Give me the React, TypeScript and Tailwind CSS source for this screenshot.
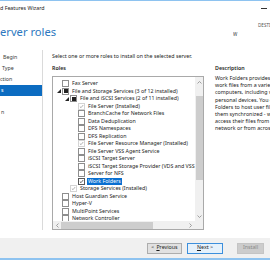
import React from "react";

type Row = {
  level: number;
  label: string;
  state: "off" | "partial" | "installed" | "on";
  expand?: boolean;
  selected?: boolean;
};

const ROWS: Row[] = [
  { level: 0, label: "Fax Server", state: "off" },
  { level: 0, label: "File and Storage Services (3 of 12 installed)", state: "partial", expand: true },
  { level: 1, label: "File and iSCSI Services (2 of 11 installed)", state: "partial", expand: true },
  { level: 2, label: "File Server (Installed)", state: "installed" },
  { level: 2, label: "BranchCache for Network Files", state: "off" },
  { level: 2, label: "Data Deduplication", state: "off" },
  { level: 2, label: "DFS Namespaces", state: "off" },
  { level: 2, label: "DFS Replication", state: "off" },
  { level: 2, label: "File Server Resource Manager (Installed)", state: "installed" },
  { level: 2, label: "File Server VSS Agent Service", state: "off" },
  { level: 2, label: "iSCSI Target Server", state: "off" },
  { level: 2, label: "iSCSI Target Storage Provider (VDS and VSS hardware providers)", state: "off" },
  { level: 2, label: "Server for NFS", state: "off" },
  { level: 2, label: "Work Folders", state: "on", selected: true },
  { level: 1, label: "Storage Services (Installed)", state: "installed" },
  { level: 0, label: "Host Guardian Service", state: "off" },
  { level: 0, label: "Hyper-V", state: "off" },
  { level: 0, label: "MultiPoint Services", state: "off" },
  { level: 0, label: "Network Controller", state: "off" },
];

const NAV = [
  { label: "Begin", pl: "pl-[3px]" },
  { label: "Type", pl: "pl-[2px]" },
  { label: "ction", pl: "pl-0" },
  { label: "s", pl: "pl-px", active: true },
  { label: "", pl: "pl-0" },
  { label: "n", pl: "pl-px" },
];

const DESCRIPTION = [
  "Work Folders provides a way to manage",
  "work files from a variety of",
  "computers, including work and",
  "personal devices. You can use Work",
  "Folders to host user files and keep",
  "them synchronized - whether users",
  "access their files from inside the",
  "network or from across the Internet.",
];

function Check({ color }: { color: string }) {
  return (
    <svg width="7" height="7" viewBox="0 0 7 7" className="block">
      <path d="M1.2 3.6 L2.8 5.2 L5.9 1.4" fill="none" stroke={color} strokeWidth="0.9" />
    </svg>
  );
}

function Box({ state }: { state: Row["state"] }) {
  if (state === "installed") {
    return (
      <div className="w-[7px] h-[7px] shrink-0 border border-[#d4d4d4] bg-white flex items-center justify-center">
        <Check color="#8a8a8a" />
      </div>
    );
  }
  if (state === "on") {
    return (
      <div className="w-[7px] h-[7px] shrink-0 border border-[#5a5a5a] bg-white flex items-center justify-center">
        <Check color="#111" />
      </div>
    );
  }
  return (
    <div className="w-[7px] h-[7px] shrink-0 border border-[#8e8e8e] bg-white flex items-center justify-center">
      {state === "partial" && <div className="w-[4px] h-[4px] bg-[#222]" />}
    </div>
  );
}

function TreeRow({ row }: { row: Row }) {
  const indent = ["pl-[3px]", "pl-[11px]", "pl-[19px]"][row.level];
  return (
    <div className={`flex items-center h-[7.5px] whitespace-nowrap ${indent}`}>
      <div className="w-[6px] h-[7px] shrink-0 flex items-center justify-center">
        {row.expand && (
          <svg width="4" height="4" viewBox="0 0 4 4" className="block">
            <polygon points="4,0 4,4 0,4" fill="#262626" />
          </svg>
        )}
      </div>
      <Box state={row.state} />
      <span
        className={`ml-[2px] px-px leading-[7px] ${
          row.selected ? "bg-[#0a6fd0] text-white" : "text-[#1b1b1b]"
        }`}
      >
        {row.label}
      </span>
    </div>
  );
}

function Chevron({ dir }: { dir: "up" | "down" | "left" | "right" }) {
  const d = {
    up: "M1.5 4.5 L3.5 2.5 L5.5 4.5",
    down: "M1.5 2.5 L3.5 4.5 L5.5 2.5",
    left: "M4.5 1.5 L2.5 3.5 L4.5 5.5",
    right: "M2.5 1.5 L4.5 3.5 L2.5 5.5",
  }[dir];
  return (
    <svg width="7" height="7" viewBox="0 0 7 7" className="block">
      <path d={d} fill="none" stroke="#8a8a8a" strokeWidth="0.8" />
    </svg>
  );
}

export default function App() {
  return (
    <div className="w-[270px] h-[260px] overflow-hidden bg-white flex flex-col font-['Noto_Sans',sans-serif] text-[5.3px] text-[#1b1b1b]">
      <div className="h-px shrink-0 bg-[#8ec3f0]" />

      {/* title bar */}
      <div className="h-[15px] shrink-0 flex items-center justify-between">
        <span className="text-[#222] whitespace-nowrap">d Features Wizard</span>
        <span className="mr-[3px] w-[6px] h-px bg-[#333]" />
      </div>

      {/* page heading */}
      <div className="h-[32px] shrink-0 flex">
        <span className="mt-[9px] text-[11.2px] leading-[14px] text-[#2d78c0] whitespace-nowrap">erver roles</span>
        <div className="flex-1" />
        <div className="w-[37px] shrink-0 flex flex-col overflow-hidden whitespace-nowrap">
          <span className="mt-[6px] pl-[25px] text-[4.6px] leading-[6px] text-[#555]">DESTINATION SERVER</span>
          <span className="mt-[3px] text-[4.6px] leading-[6px] text-[#333]">W</span>
        </div>
      </div>

      {/* body */}
      <div className="h-[190px] shrink-0 flex">
        <div className="w-[42px] shrink-0 pt-[4px] flex flex-col">
          {NAV.map((item, i) => (
            <div
              key={i}
              className={`h-[11px] flex items-center whitespace-nowrap ${item.pl} ${
                item.active ? "bg-[#0c6cc1] text-white" : "text-[#3a3a3a]"
              }`}
            >
              {item.label}
            </div>
          ))}
        </div>
        <div className="w-px shrink-0 h-[180px] mt-[2px] bg-[#dadada]" />

        <div className="ml-[9px] shrink-0 flex flex-col">
          <div className="h-[8px] mt-[4px] leading-[8px] whitespace-nowrap">
            Select one or more roles to install on the selected server.
          </div>
          <div className="flex mt-[4px]">
            <div className="flex flex-col shrink-0">
              <div className="h-[8px] leading-[8px] font-semibold">Roles</div>
              <div className="mt-[4px] w-[152px] h-[154px] border border-[#a9a9a9] flex flex-col">
                <div className="flex h-[144px]">
                  <div className="w-[142px] shrink-0 pt-[3px] overflow-hidden">
                    {ROWS.map((row) => (
                      <TreeRow key={row.label} row={row} />
                    ))}
                  </div>
                  <div className="w-[8px] shrink-0 bg-[#f0f0f0] flex flex-col items-center">
                    <div className="h-[10px] flex items-center">
                      <Chevron dir="up" />
                    </div>
                    <div className="mt-[9px] w-[7px] h-[84px] bg-[#cdcdcd]" />
                    <div className="flex-1" />
                    <div className="h-[10px] flex items-center">
                      <Chevron dir="down" />
                    </div>
                  </div>
                </div>
                <div className="flex h-[8px] bg-[#f0f0f0]">
                  <div className="w-[8px] shrink-0 flex items-center justify-center">
                    <Chevron dir="left" />
                  </div>
                  <div className="w-[92px] shrink-0 h-[7px] mt-[0.5px] bg-[#cdcdcd]" />
                  <div className="flex-1" />
                  <div className="w-[9px] shrink-0 flex items-center justify-center">
                    <Chevron dir="right" />
                  </div>
                  <div className="w-[8px] shrink-0 bg-[#f0f0f0]" />
                </div>
              </div>
            </div>

            <div className="ml-[11px] shrink-0 flex flex-col whitespace-nowrap">
              <div className="h-[8px] leading-[8px] font-semibold">Description</div>
              <div className="mt-[3px] leading-[7.2px] text-[#222]">
                {DESCRIPTION.map((line) => (
                  <div key={line}>{line}</div>
                ))}
              </div>
            </div>
          </div>
        </div>
      </div>

      {/* footer */}
      <div className="h-[20px] shrink-0 bg-[#f0f0f0] flex items-center pl-[147px] gap-[5px] whitespace-nowrap">
        <div className="w-[35px] h-[11px] shrink-0 border border-[#adadad] bg-[#e1e1e1] flex items-center justify-center">
          &lt; <span className="underline ml-[2px]">P</span>revious
        </div>
        <div className="w-[36px] h-[11px] shrink-0 border border-[#3c8fdc] bg-[#e5f1fb] flex items-center justify-center">
          <span className="underline">N</span>ext &gt;
        </div>
        <div className="ml-[9px] w-[27px] h-[11px] shrink-0 border border-[#c4c4c4] bg-[#cccccc] text-[#8a8a8a] flex items-center justify-center">
          Install
        </div>
        <div className="ml-[1px] w-[30px] h-[11px] shrink-0 border border-[#adadad] bg-[#e1e1e1]" />
      </div>
      <div className="h-[2px] shrink-0 bg-[#8ec3f0]" />
    </div>
  );
}
